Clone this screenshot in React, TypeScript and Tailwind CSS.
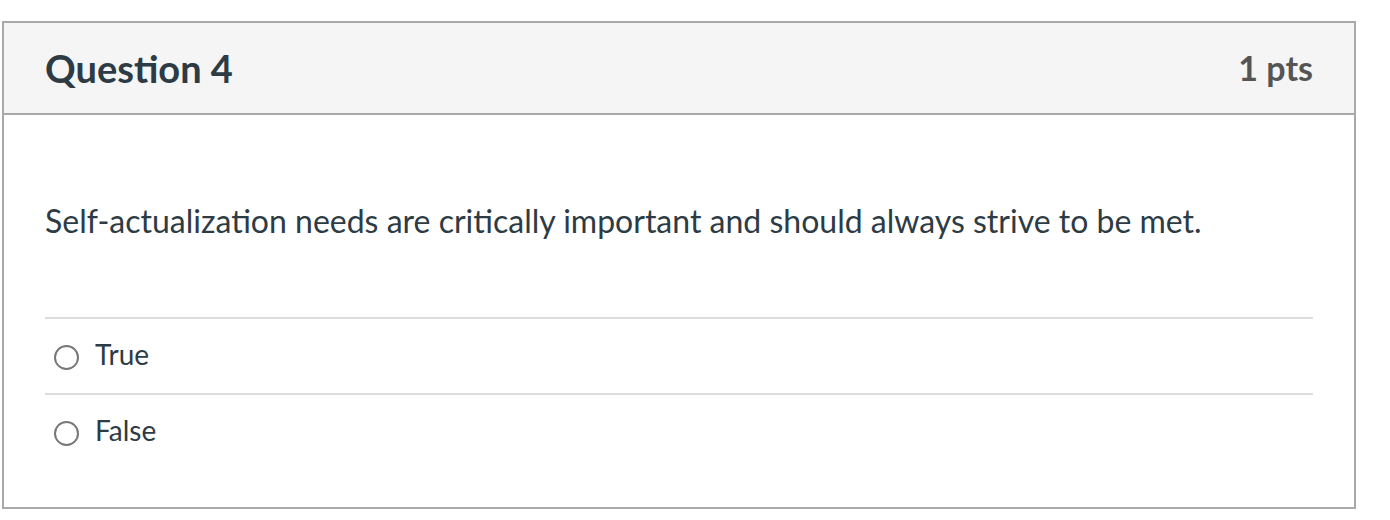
const answers = ['True', 'False'];

export default function App() {
    return (
        <div className="min-h-[520px] bg-white pt-[21px] pl-[2px]" style={{ fontFamily: 'Lato, "Open Sans", sans-serif' }}>
            <div className="w-[1354px] border-2 border-[#a9a9a9] bg-white">
                {/* Header */}
                <div className="h-[92px] flex items-center justify-between px-[41px] bg-[#f5f5f5] border-b-2 border-[#a9a9a9]">
                    <h2 className="text-[38px] leading-none font-bold text-[#2d3b45]">Question 4</h2>
                    <span className="text-[34px] leading-none font-bold text-[#555555]">1 pts</span>
                </div>

                {/* Body */}
                <div className="px-[41px] pt-[84px] pb-[38px]">
                    <p className="text-[32px] leading-[44px] text-[#2d3b45] mb-[74px]">
                        Self-actualization needs are critically important and should always strive to be met.
                    </p>
                    {answers.map((a) => (
                        <div key={a} className="border-t-2 border-[#dddddd] pt-[16px] pb-[21px]">
                            <label className="flex items-start gap-[16px] pl-[9px]">
                                <span className="mt-[10px] w-[25px] h-[25px] rounded-full border-2 border-[#777777] bg-white shrink-0" />
                                <span className="text-[28px] leading-[36px] pt-[1px] text-[#2d3b45]">{a}</span>
                            </label>
                        </div>
                    ))}
                </div>
            </div>
        </div>
    );
}
